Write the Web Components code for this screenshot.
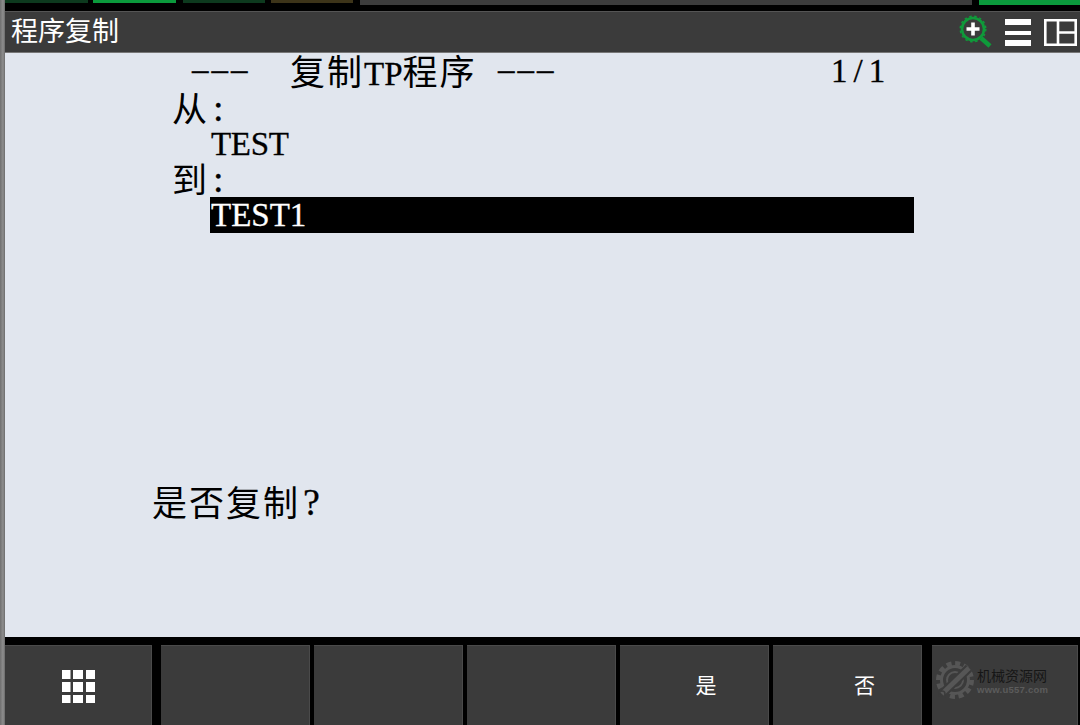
<!DOCTYPE html>
<html><head><meta charset="utf-8">
<style>
html,body{margin:0;padding:0;width:1080px;height:725px;overflow:hidden;background:#000}
</style></head><body>
<template id="t-app"><style>
:host{display:grid;grid-template-columns:5px 1fr;width:1080px;height:725px;background:#000}
.edge{background:linear-gradient(90deg,#6f6f6f,#8e8e8e 60%,#6a6a6a)}
.main{display:grid;grid-template-rows:11px 42px 584px 8px 80px;min-width:0}
</style><div class="edge"></div><div class="main"><slot></slot></div></template>

<template id="t-status"><style>
:host{display:flex;height:11px;background:#000;overflow:hidden}
i{display:block;height:3px;flex:none}
.a{width:83px;background:#0d3a1e}
.b{width:83px;margin-left:5px;background:#0b9a3c}
.c{width:82px;margin-left:7px;background:#0d3a1e}
.d{width:82px;margin-left:6px;background:#3d3419}
.e{width:612px;margin-left:7px;height:5px;background:#3c3c3c}
.f{width:101px;margin-left:7px;height:5px;background:#0b9a3c}
</style><i class="a"></i><i class="b"></i><i class="c"></i><i class="d"></i><i class="e"></i><i class="f"></i></template>

<template id="t-title"><style>
:host{display:flex;align-items:center;height:42px;background:#3b3b3b;border-top:1px solid #555;border-bottom:1px solid #777;box-sizing:border-box;color:#fff;font:27px/1 "Noto Sans CJK SC",sans-serif}
.t{padding:0 0 5px 6px;flex:1}
.icons{display:flex;align-items:center;padding-right:3px}
svg{display:block;flex:none}
.h{margin-left:12px}.p{margin-left:13px}
</style><div class="t"><slot></slot></div><div class="icons">
<svg width="34" height="34" viewBox="0 0 34 34"><circle cx="14" cy="14" r="11" fill="none" stroke="#0f9a3a" stroke-width="2.600"/><circle cx="14" cy="14" r="12.800" fill="none" stroke="#0f9a3a" stroke-width="1.400" stroke-dasharray="2.500 2.600"/><path d="M22 23l9 8" stroke="#0f9a3a" stroke-width="4.500"/><path d="M14 7.500v13M7.500 14h13" stroke="#fff" stroke-width="3.600"/></svg>
<svg class="h" width="26" height="27" viewBox="0 0 26 27" fill="#fff"><path d="M0 0h26v6H0zM0 12h26v4H0zM0 21h26v6H0z"/></svg>
<svg class="p" width="33" height="27" viewBox="0 0 33 27"><path d="M1.300 1.300h30.400v24.400H1.300zM14 1.300v24.400M14 13.500h17.700" fill="none" stroke="#fff" stroke-width="2.600"/></svg>
</div></template>

<template id="t-screen"><style>
:host{display:block;background:#e1e6ee;color:#000;font:33px/36px "Liberation Serif","Noto Sans CJK SC",serif;-webkit-text-stroke:.3px currentColor}
</style><slot></slot></template>

<template id="t-line"><style>
:host{display:flex;white-space:pre;margin:var(--mt,0) 0 0 var(--x,0);width:var(--w,auto);height:36px;line-height:36px;background:var(--bg,transparent);color:var(--fg,#000);padding-left:var(--pl,0)}
</style><slot></slot></template>

<template id="t-cell"><style>
:host{display:block;flex:none;width:var(--w,auto);margin-left:var(--m,0);letter-spacing:var(--ls,0);font-size:var(--fs,inherit);line-height:var(--lh,inherit)}
</style><slot></slot></template>

<template id="t-cjk"><style>
:host{display:inline;font-size:35px;letter-spacing:2px;-webkit-text-stroke:0;font-family:"Noto Sans CJK SC",sans-serif;line-height:34px}
</style><slot></slot></template>

<template id="t-keys"><style>
:host{display:flex;height:80px;background:#000}
</style><slot></slot></template>

<template id="t-key"><style>
:host{display:flex;align-items:center;justify-content:center;box-sizing:border-box;background:#3b3b3b;border-top:1px solid #4a4a4a;border-right:1px solid #4a4a4a;color:#fff;font:21px/1 "Noto Sans CJK SC",sans-serif;padding-bottom:3px;height:80px;width:var(--w);margin-left:var(--m,0);padding-left:var(--pl,0);position:relative}
</style><slot></slot></template>

<template id="t-mark"><style>
:host{position:absolute;left:3px;top:14px;width:115px;height:42px;display:block}
svg{position:absolute;left:0;top:0}
.a{position:absolute;left:42px;top:7px;font:14px/16px "Noto Sans CJK SC",sans-serif;color:#161616;white-space:nowrap}
.b{position:absolute;left:42px;top:24px;font:bold 9.500px/11px "Liberation Sans",sans-serif;color:#5c5c5c;white-space:nowrap;letter-spacing:.25px}
</style>
<svg width="42" height="42" viewBox="0 0 42 42" fill="none"><circle cx="20" cy="20" r="16.500" stroke="#565656" stroke-width="5" stroke-dasharray="5 3.600"/><circle cx="20" cy="20" r="13.500" stroke="#565656" stroke-width="3"/><circle cx="20" cy="20" r="8" stroke="#565656" stroke-width="2"/><path d="M7 34L34 8" stroke="#3b3b3b" stroke-width="9"/><path d="M7 34L34 8" stroke="#565656" stroke-width="5"/><circle cx="7" cy="34" r="3" stroke="#3b3b3b" stroke-width="1.500"/></svg>
<div class="a">机械资源网</div><div class="b">www.u557.com</div></template>

<app-shell>
<status-bar></status-bar>
<title-bar>程序复制</title-bar>
<tp-screen>
<tp-line style="--x:187px"><tp-cell style="--w:98px;--ls:3px;--lh:32px">–––</tp-cell><tp-cell style="--w:208px"><cjk-t>复制</cjk-t>TP<cjk-t>程序</cjk-t></tp-cell><tp-cell style="--w:333px;--ls:3px;--lh:32px">–––</tp-cell><tp-cell style="--ls:6px">1/1</tp-cell></tp-line>
<tp-line style="--x:167px;--mt:1px"><cjk-t>从</cjk-t><tp-cell style="--m:4px;--fs:38px">:</tp-cell></tp-line>
<tp-line style="--x:206px;letter-spacing:-.3px">TEST</tp-line>
<tp-line style="--x:167px;--mt:-1px"><cjk-t>到</cjk-t><tp-cell style="--m:4px;--fs:38px">:</tp-cell></tp-line>
<tp-line style="--x:205px;--w:703px;--pl:1px;--bg:#000;--fg:#fff">TEST1</tp-line>
<tp-line style="--x:147px;--mt:251px"><cjk-t>是否复制</cjk-t><tp-cell style="--m:3px;--fs:38px">?</tp-cell></tp-line>
</tp-screen>
<div></div>
<key-bar>
<tp-key style="--w:147px"><svg style="margin:4px 0 0 1px" width="33" height="33" viewBox="0 0 33 33" fill="#fff"><path d="M0 0h8.500v9H0zM11 0h10v9H11zM24 0h9v9h-9zM0 12h8.500v10H0zM11 12h10v10H11zM24 12h9v10h-9zM0 25h8.500v8H0zM11 25h10v8H11zM24 25h9v8h-9z"/></svg></tp-key>
<tp-key style="--w:149px;--m:9px"></tp-key>
<tp-key style="--w:149px;--m:4px"></tp-key>
<tp-key style="--w:149px;--m:4px"></tp-key>
<tp-key style="--w:149px;--m:4px;--pl:24px">是</tp-key>
<tp-key style="--w:149px;--m:4px;--pl:35px">否</tp-key>
<tp-key style="--w:146px;--m:10px"><water-mark></water-mark></tp-key>
</key-bar>
</app-shell>
<script>
const def=(n,t)=>customElements.define(n,class extends HTMLElement{constructor(){super();this.attachShadow({mode:"open"}).append(document.getElementById(t).content.cloneNode(true))}});
def("app-shell","t-app");def("status-bar","t-status");def("title-bar","t-title");def("tp-screen","t-screen");def("tp-line","t-line");def("tp-cell","t-cell");def("cjk-t","t-cjk");def("key-bar","t-keys");def("tp-key","t-key");def("water-mark","t-mark");
</script>
</body></html>
